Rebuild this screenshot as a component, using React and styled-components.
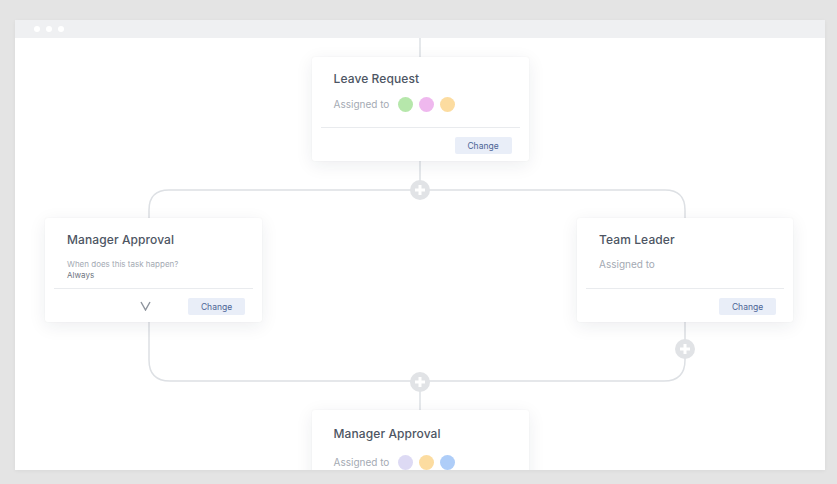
import styled, { createGlobalStyle } from "styled-components";

const GlobalStyle = createGlobalStyle`
  html, body {
    margin: 0;
    padding: 0;
    background: #e4e4e4;
    font-family: Inter, "Liberation Sans", sans-serif;
  }
`

const Page = styled.div`
  width: 837px;
  height: 484px;
  box-sizing: border-box;
  padding: 20px 12px 14px 15px;
  background: #e4e4e4;
`
const Window = styled.div`
  width: 810px;
  height: 450px;
  background: #ffffff;
  display: flex;
  flex-direction: column;
  box-shadow: 0 1px 4px rgba(0, 0, 0, 0.05);
  overflow: hidden;
`
const TitleBar = styled.div`
  height: 18px;
  flex-shrink: 0;
  background: #eff0f2;
  display: flex;
  align-items: center;
  gap: 6px;
  padding-left: 19px;
`
const Dot = styled.span`
  width: 6px;
  height: 6px;
  border-radius: 50%;
  background: #ffffff;
`
const Canvas = styled.div`
  position: relative;
  flex: 1;
  overflow: hidden;
  padding-top: 19px;
  display: flex;
  flex-direction: column;
`
const Lines = styled.svg`
  position: absolute;
  left: 0;
  top: 0;
  width: 810px;
  height: 432px;
`
const Card = styled.div`
  position: relative;
  width: ${props => props.width || 217}px;
  height: 104px;
  box-sizing: border-box;
  background: #ffffff;
  border-radius: 3px;
  box-shadow: 0 4px 18px rgba(30, 40, 60, 0.08), 0 0 2px rgba(30, 40, 60, 0.05);
  display: flex;
  flex-direction: column;
  align-self: ${props => props.center ? 'center' : 'auto'};
  margin-top: ${props => props.top || 0}px;
  flex-shrink: 0;
`
const CardBody = styled.div`
  height: 71px;
  box-sizing: border-box;
  padding: ${props => props.pad || 14}px 12px 0 13px;
  border-bottom: 1px solid #e9ebee;
  margin: 0 9px;
`
const Title = styled.div`
  font-size: 12px;
  font-weight: 500;
  color: #4d5563;
  line-height: 16px;
  letter-spacing: 0.1px;
`
const Assigned = styled.div`
  margin-top: ${props => props.gap || 9}px;
  display: flex;
  align-items: center;
  font-size: 10px;
  color: #a4aab3;
  height: 16px;
`
const Avatars = styled.div`
  display: flex;
  gap: 6px;
  margin-left: 9px;
`
const Avatar = styled.span`
  width: 15px;
  height: 15px;
  border-radius: 50%;
  background: ${props => props.color};
`
const Question = styled.div`
  margin-top: 11px;
  font-size: 8px;
  line-height: 11px;
  color: #a4aab3;
`
const Answer = styled.div`
  font-size: 8px;
  line-height: 11px;
  color: #6d7480;
`
const Footer = styled.div`
  flex: 1;
  display: flex;
  align-items: flex-start;
  justify-content: flex-end;
  padding: 9px 17px 0 0;
  position: relative;
`
const ChangeButton = styled.button`
  width: 57px;
  height: 17px;
  border: none;
  border-radius: 2px;
  background: #e9eef8;
  color: #4b6496;
  font-family: Inter, "Liberation Sans", sans-serif;
  font-size: 8.5px;
  padding: 0;
`
const Chevron = styled.svg`
  position: absolute;
  left: 95px;
  top: 12px;
`
const BranchRow = styled.div`
  display: flex;
  justify-content: space-between;
  padding: 0 32px 0 30px;
  margin-top: 57px;
`

function Plus({ x, y }) {
  return (
    <g>
      <circle cx={x} cy={y} r="10" fill="#e1e3e6" />
      <line x1={x - 5} y1={y} x2={x + 5} y2={y} stroke="#ffffff" strokeWidth="3" />
      <line x1={x} y1={y - 5} x2={x} y2={y + 5} stroke="#ffffff" strokeWidth="3" />
    </g>
  )
}

function AssignedTo({ colors, gap }) {
  return (
    <Assigned gap={gap}>
      Assigned to
      {colors.length > 0 && (
        <Avatars>
          {colors.map(c => <Avatar key={c} color={c} />)}
        </Avatars>
      )}
    </Assigned>
  )
}

export default function App() {
  return (
    <Page>
      <GlobalStyle />
      <Window>
        <TitleBar>
          <Dot /><Dot /><Dot />
        </TitleBar>
        <Canvas>
          <Lines viewBox="0 0 810 432">
            <g fill="none" stroke="#dde0e4" strokeWidth="1.5">
              <path d="M405 0 L405 19" />
              <path d="M405 123 L405 152" />
              <path d="M134 180 L134 172 Q134 152 154 152 L650 152 Q670 152 670 172 L670 180" />
              <path d="M134 284 L134 322 Q134 343 155 343 L649 343 Q670 343 670 322 L670 284" />
              <path d="M405 343 L405 372" />
            </g>
            <Plus x={405} y={152} />
            <Plus x={670} y={311} />
            <Plus x={405} y={344} />
          </Lines>

          <Card center>
            <CardBody>
              <Title>Leave Request</Title>
              <AssignedTo colors={['#b6e7ab', '#efb8ee', '#fcdca0']} />
            </CardBody>
            <Footer>
              <ChangeButton>Change</ChangeButton>
            </Footer>
          </Card>

          <BranchRow>
            <Card>
              <CardBody>
                <Title>Manager Approval</Title>
                <Question>When does this task happen?</Question>
                <Answer>Always</Answer>
              </CardBody>
              <Footer>
                <Chevron width="11" height="10" viewBox="0 0 11 10">
                  <polyline points="1,1 5.5,9 10,1" fill="none" stroke="#8d939c" strokeWidth="1.4" />
                </Chevron>
                <ChangeButton>Change</ChangeButton>
              </Footer>
            </Card>
            <Card width={216}>
              <CardBody>
                <Title>Team Leader</Title>
                <AssignedTo colors={[]} gap={8} />
              </CardBody>
              <Footer>
                <ChangeButton>Change</ChangeButton>
              </Footer>
            </Card>
          </BranchRow>

          <Card center top={88}>
            <CardBody pad={16}>
              <Title>Manager Approval</Title>
              <AssignedTo colors={['#dddaf4', '#fcdca0', '#aecdf8']} gap={12} />
            </CardBody>
            <Footer>
              <ChangeButton>Change</ChangeButton>
            </Footer>
          </Card>
        </Canvas>
      </Window>
    </Page>
  );
}
